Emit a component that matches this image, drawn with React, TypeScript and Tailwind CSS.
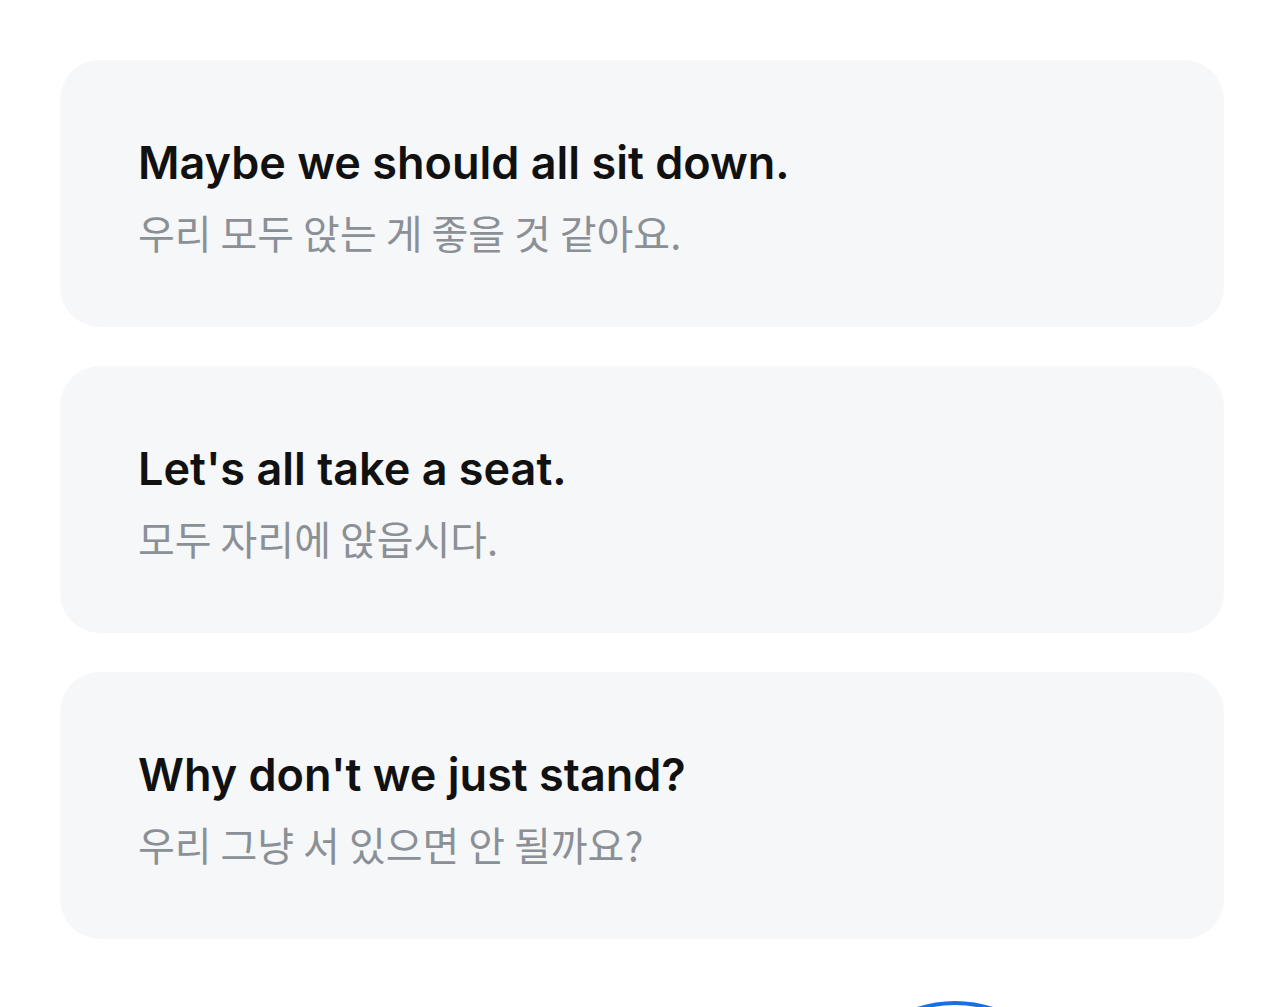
import React from "react";

const items = [
  { en: "Maybe we should all sit down.", ko: "우리 모두 앉는 게 좋을 것 같아요." },
  { en: "Let's all take a seat.", ko: "모두 자리에 앉읍시다." },
  { en: "Why don't we just stand?", ko: "우리 그냥 서 있으면 안 될까요?" },
];

export default function App() {
  return (
    <div className="h-[1007px] overflow-hidden bg-white" style={{ fontFamily: 'Inter, "Noto Sans CJK KR", sans-serif' }}>
      <div className="flex flex-col gap-[39px] px-[60px] pt-[60px]">
        {items.map((it) => (
          <div key={it.en} className="h-[267px] rounded-[40px] bg-[#f6f7f9] flex flex-col justify-center px-[78px] pt-[8px]">
            <div className="text-[45px] font-semibold text-[#111111] leading-[54px]">{it.en}</div>
            <div className="text-[40px] font-normal text-[#8b9096] leading-[56px] mt-[14px]" style={{ fontFamily: '"Noto Sans CJK KR", sans-serif' }}>{it.ko}</div>
          </div>
        ))}
      </div>
      <div className="relative">
        <div className="absolute left-[831px] top-[62px] w-[248px] h-[248px] rounded-full border-[4px] border-[#1671e8]" />
      </div>
    </div>
  );
}
